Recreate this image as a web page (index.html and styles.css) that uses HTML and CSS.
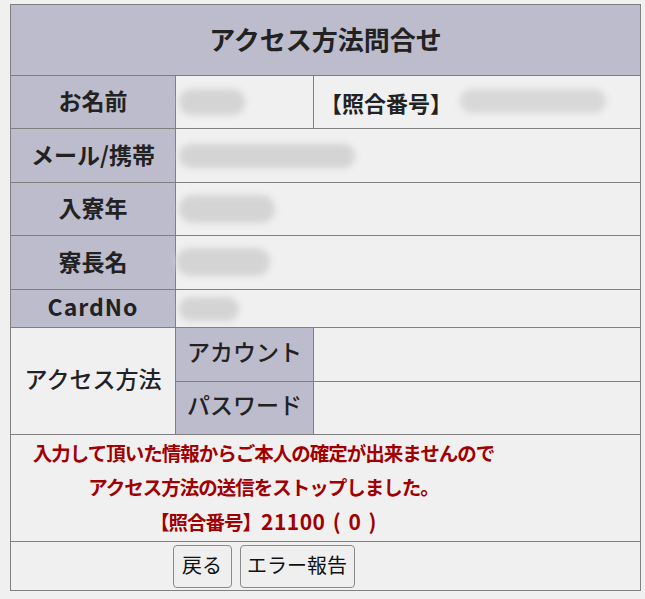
FILE: index.html
```html
<!DOCTYPE html>
<html lang="ja">
<head>
<meta charset="utf-8">
<title>アクセス方法問合せ</title>
<link rel="stylesheet" href="styles.css">
</head>
<body>
<table class="form">
  <colgroup>
    <col class="c1"><col class="c2"><col class="c3">
  </colgroup>
  <tr class="r-head"><th colspan="3" class="title">アクセス方法問合せ</th></tr>
  <tr class="r-std">
    <th class="lbl">お名前</th>
    <td class="val"><span class="blob b-name"></span></td>
    <td class="val ref"><span class="reflbl">【照合番号】</span><span class="blob b-ref"></span></td>
  </tr>
  <tr class="r-std2">
    <th class="lbl">メール/携帯</th>
    <td class="val" colspan="2"><span class="blob b-mail"></span></td>
  </tr>
  <tr class="r-std">
    <th class="lbl">入寮年</th>
    <td class="val" colspan="2"><span class="blob b-year"></span></td>
  </tr>
  <tr class="r-std2">
    <th class="lbl">寮長名</th>
    <td class="val" colspan="2"><span class="blob b-boss"></span></td>
  </tr>
  <tr class="r-card">
    <th class="lbl latin">CardNo</th>
    <td class="val" colspan="2"><span class="blob b-card"></span></td>
  </tr>
  <tr class="r-std2">
    <td class="method" rowspan="2">アクセス方法</td>
    <th class="sub">アカウント</th>
    <td class="val"></td>
  </tr>
  <tr class="r-std">
    <th class="sub">パスワード</th>
    <td class="val"></td>
  </tr>
  <tr class="r-msg">
    <td colspan="3" class="msg">入力して頂いた情報からご本人の確定が出来ませんので<br>アクセス方法の送信をストップしました。<br>【照合番号】<span class="num">21100 ( 0 )</span></td>
  </tr>
  <tr class="r-btn">
    <td colspan="3" class="btns"><div class="btnrow"><button class="btn btn-back">戻る</button><button class="btn btn-err">エラー報告</button></div></td>
  </tr>
</table>
</body>
</html>
```
FILE: styles.css
```css
html, body {
  background: #f0f0f0;
}
body {
  margin: 4px 0 0 10px;
  font-family: "Noto Sans CJK JP", "Noto Sans", sans-serif;
  color: #222;
}
.form {
  border-collapse: collapse;
  width: 630px;
  table-layout: fixed;
  background: #f0f0f0;
  line-height: 30px;
}
.c1 { width: 165px; }
.c2 { width: 138px; }
.c3 { width: 327px; }
.form th, .form td {
  border: 1px solid #808080;
  padding: 0 0 4px 0;
  box-sizing: border-box;
}
.form .title {
  background: #bdbccd;
  font-size: 26px;
  font-weight: bold;
  height: 71px;
  color: #222;
  padding-bottom: 3px;
}
.lbl {
  background: #bdbccd;
  font-size: 23px;
  font-weight: bold;
  text-align: center;
  color: #222;
}
.lbl.latin {
  letter-spacing: 1px;
}
.form .r-card th, .form .r-card td {
  padding-bottom: 5px;
}
.sub {
  background: #bdbccd;
  font-size: 23px;
  font-weight: 500;
  text-align: center;
  color: #222;
}
.form .sub {
  padding-bottom: 8px;
}
.method {
  font-size: 23px;
  font-weight: 500;
  text-align: center;
  color: #222;
}
.form .method {
  padding-bottom: 6px;
}
.r-std th, .r-std td { height: 53px; }
.r-std2 th, .r-std2 td { height: 54px; }
.r-card th, .r-card td { height: 38px; }
.val {
  text-align: left;
  vertical-align: middle;
}
.form .val {
  padding-left: 3px;
}
.form .ref {
  padding-left: 6px;
  white-space: nowrap;
}
.reflbl {
  font-size: 22px;
  font-weight: bold;
  vertical-align: middle;
}
.blob {
  display: inline-block;
  vertical-align: middle;
  background: #d4d4d4;
  border-radius: 14px;
  filter: blur(3px);
}
.b-name { width: 66px; height: 26px; }
.b-ref { width: 146px; height: 24px; margin-left: 8px; background: #d8d8d8; }
.b-mail { width: 176px; height: 24px; }
.b-year { width: 96px; height: 28px; }
.b-boss { width: 94px; height: 28px; margin-left: -3px; }
.b-card { width: 60px; height: 24px; }
.form .msg {
  height: 107px;
  text-align: center;
  color: #a00000;
  font-size: 19.5px;
  letter-spacing: -1px;
  font-weight: bold;
  line-height: 34px;
  padding: 1px 124px 0 0;
  vertical-align: top;
  white-space: nowrap;
}
.num {
  font-size: 21px;
  letter-spacing: 0.5px;
  word-spacing: 2px;
}
.form .btns {
  height: 49px;
  padding: 0 124px 0 0;
  vertical-align: middle;
}
.btnrow {
  display: flex;
  justify-content: center;
  gap: 8px;
}
.btn {
  font-family: "Noto Sans CJK JP", sans-serif;
  font-size: 20px;
  background: #efefef;
  border: 1px solid #8a8a8a;
  border-radius: 4px;
  color: #111;
  height: 43px;
  padding: 0 0 3px 0;
  white-space: nowrap;
}
.btn-back { width: 59px; }
.btn-err { width: 115px; }
```
